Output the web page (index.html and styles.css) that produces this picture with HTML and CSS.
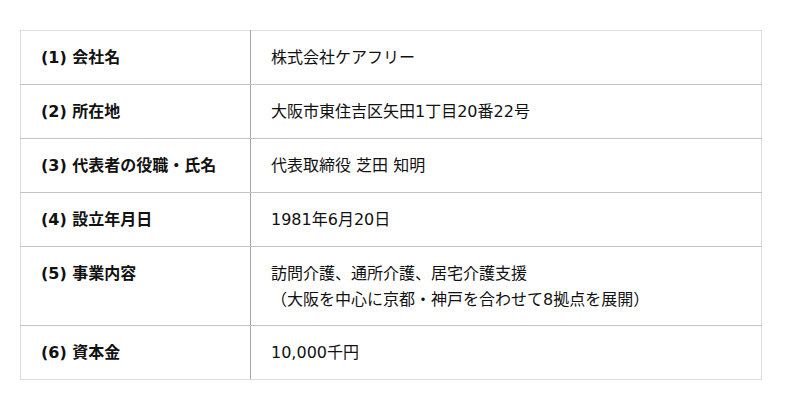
FILE: index.html
```html
<!DOCTYPE html>
<html lang="ja">
<head>
<meta charset="utf-8">
<link rel="stylesheet" href="styles.css">
</head>
<body>
<table class="info">
  <tr><th>(1) 会社名</th><td>株式会社ケアフリー</td></tr>
  <tr><th>(2) 所在地</th><td>大阪市東住吉区矢田1丁目20番22号</td></tr>
  <tr><th>(3) 代表者の役職・氏名</th><td>代表取締役 芝田 知明</td></tr>
  <tr><th>(4) 設立年月日</th><td>1981年6月20日</td></tr>
  <tr><th>(5) 事業内容</th><td>訪問介護、通所介護、居宅介護支援<br>（大阪を中心に京都・神戸を合わせて8拠点を展開）</td></tr>
  <tr><th>(6) 資本金</th><td>10,000千円</td></tr>
</table>
</body>
</html>
```
FILE: styles.css
```css
html, body { margin: 0; padding: 0; background: #fff; }
body {
  padding: 30px 0 0 20px;
  font-family: "DejaVu Sans", "Noto Sans CJK JP", sans-serif;
  font-size: 16px;
  color: #111;
}
.info {
  width: 742px;
  border-collapse: collapse;
  border: 1px solid #dcdcdc;
}
.info th, .info td {
  text-align: left;
  vertical-align: top;
  padding: 14px 20px 13px 20px;
  line-height: 26px;
  border-top: 1px solid #c4c4c4;
  border-bottom: 1px solid #c4c4c4;
}
.info tr:first-child th, .info tr:first-child td { border-top-color: #dcdcdc; }
.info tr:last-child th, .info tr:last-child td { border-bottom-color: #dcdcdc; }
.info th {
  width: 189px;
  font-weight: bold;
  border-right: 1px solid #a8a8a8;
}
.info td { font-weight: normal; }
.info tr:nth-child(5) td { padding-bottom: 12px; }
```
